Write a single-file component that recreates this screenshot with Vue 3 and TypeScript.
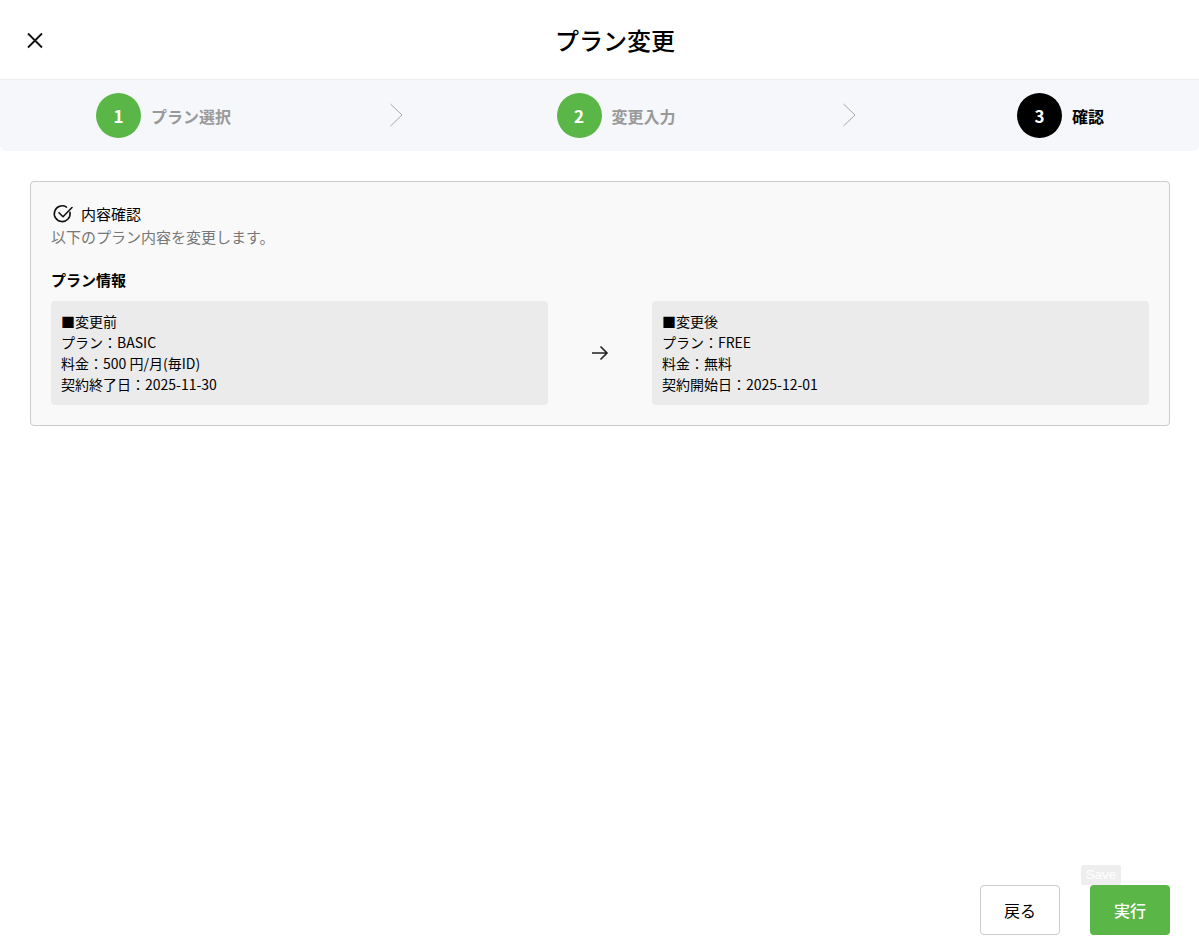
<script setup lang="ts">
interface Step { no: number; label: string; active: boolean }
const steps: Step[] = [
  { no: 1, label: 'プラン選択', active: false },
  { no: 2, label: '変更入力', active: false },
  { no: 3, label: '確認', active: true },
]
const before = ['■変更前', 'プラン：BASIC', '料金：500 円/月(毎ID)', '契約終了日：2025-11-30']
const after = ['■変更後', 'プラン：FREE', '料金：無料', '契約開始日：2025-12-01']
</script>

<template>
  <div class="page">
    <header class="head">
      <button class="close" aria-label="閉じる">
        <svg width="18" height="18" viewBox="0 0 18 18" fill="none" stroke="#111" stroke-width="1.8">
          <path d="M2 2.5 L16 16.5 M16 2.5 L2 16.5" />
        </svg>
      </button>
      <h1 class="title">プラン変更</h1>
    </header>

    <nav class="stepper">
      <template v-for="(s, i) in steps" :key="s.no">
        <div class="step" :class="{ active: s.active }">
          <span class="num">{{ s.no }}</span>
          <span class="label">{{ s.label }}</span>
        </div>
        <svg v-if="i < 2" class="chev" width="14" height="24" viewBox="0 0 14 24" fill="none" stroke="#a8a8a8" stroke-width="1">
          <path d="M0.5 1 L12 12 L0.5 23" />
        </svg>
      </template>
    </nav>

    <main class="main">
      <section class="card">
        <div class="card-head">
          <svg width="22" height="22" viewBox="0 0 22 22" fill="none" stroke="#111" stroke-width="1.6" stroke-linecap="round" stroke-linejoin="round">
            <path d="M18 9.4 A7.9 7.9 0 1 1 14.5 4.06" />
            <path d="M7 9.7 L11 13.7 L20 4.5" />
          </svg>
          <span>内容確認</span>
        </div>
        <p class="desc">以下のプラン内容を変更します。</p>
        <h2 class="sub">プラン情報</h2>
        <div class="compare">
          <div class="box">
            <div v-for="l in before" :key="l">{{ l }}</div>
          </div>
          <svg class="arrow" width="18" height="16" viewBox="0 0 18 16" fill="none" stroke="#222" stroke-width="1.6">
            <path d="M1 8 H16 M9.5 1.5 L16 8 L9.5 14.5" />
          </svg>
          <div class="box">
            <div v-for="l in after" :key="l">{{ l }}</div>
          </div>
        </div>
      </section>
    </main>

    <footer class="foot">
      <button class="btn back">戻る</button>
      <div class="run-wrap">
        <span class="save">Save</span>
        <button class="btn run">実行</button>
      </div>
    </footer>
  </div>
</template>

<style>
html, body { margin: 0; background: #fff; }
</style>

<style scoped>
.page {
  height: 943px;
  display: flex;
  flex-direction: column;
  font-family: "Noto Sans CJK JP", "Noto Sans", sans-serif;
  color: #000;
  box-sizing: border-box;
}
.head {
  height: 79px;
  display: flex;
  align-items: center;
  padding-left: 26px;
  flex: none;
}
.close {
  width: 18px;
  height: 18px;
  padding: 0;
  border: 0;
  background: none;
  display: flex;
}
.title {
  margin: 0 0 0 511px;
  font-size: 24px;
  font-weight: 500;
  line-height: 1;
}
.stepper {
  height: 71px;
  flex: none;
  border-top: 1px solid #eeeeee;
  background: #f5f7fb;
  border-radius: 0 0 6px 6px;
  display: grid;
  grid-template-columns: 294px 166.5px 286.5px 174px auto;
  align-items: center;
  padding-left: 96px;
}
.step {
  display: flex;
  align-items: center;
  gap: 10px;
}
.num {
  width: 45px;
  height: 45px;
  border-radius: 50%;
  background: #5ab647;
  color: #fff;
  font-size: 17px;
  font-weight: 700;
  display: flex;
  align-items: center;
  justify-content: center;
}
.label {
  font-size: 16px;
  font-weight: 700;
  color: #999;
}
.active .num { background: #000; }
.active .label { color: #000; }
.chev { display: block; margin-bottom: 2px; }
.main { padding: 30px 29px 0 30px; }
.card {
  height: 245px;
  box-sizing: border-box;
  border: 1px solid #cccccc;
  border-radius: 4px;
  background: #f9f9f9;
  padding: 21px 20px;
}
.card-head {
  display: flex;
  align-items: center;
  gap: 7px;
  padding-left: 1px;
  font-size: 15px;
  font-weight: 400;
  line-height: 22px;
}
.desc {
  margin: 0;
  font-size: 15px;
  line-height: 24px;
  color: #777;
}
.sub {
  margin: 19px 0 9px;
  font-size: 15px;
  font-weight: 700;
  line-height: 24px;
}
.compare {
  display: grid;
  grid-template-columns: 497px 1fr 497px;
  align-items: center;
  justify-items: center;
}
.box {
  justify-self: stretch;
  background: #ebebeb;
  border-radius: 4px;
  padding: 10px;
  font-size: 14px;
  line-height: 21px;
}
.foot {
  margin-top: auto;
  padding: 0 29px 8px 0;
  display: flex;
  justify-content: flex-end;
  gap: 30px;
}
.run-wrap { position: relative; }
.save {
  position: absolute;
  top: -20px;
  left: -9px;
  width: 40px;
  height: 20px;
  background: #eeeeee;
  border-radius: 2px;
  color: #fff;
  font: 13.33px/20px "Liberation Sans", sans-serif;
  text-align: center;
}
.btn {
  width: 80px;
  height: 50px;
  box-sizing: border-box;
  border-radius: 4px;
  font-family: inherit;
  font-size: 16px;
  font-weight: 400;
  padding: 0;
  display: block;
}
.back {
  background: #fff;
  border: 1px solid #cccccc;
  color: #000;
}
.run {
  background: #5ab647;
  border: 0;
  color: #fff;
  font-weight: 500;
}
</style>
